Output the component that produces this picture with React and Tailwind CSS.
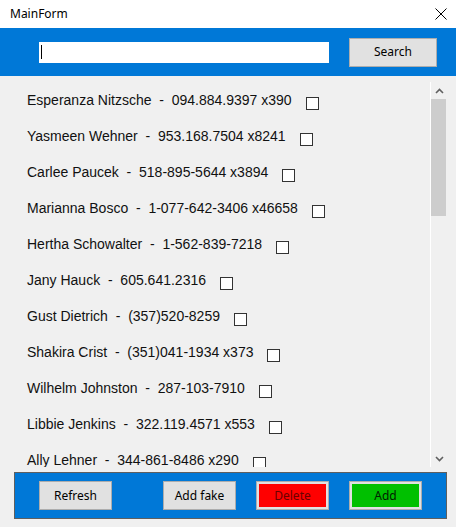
import React from "react";

const contacts = [
  { name: "Esperanza Nitzsche", phone: "094.884.9397 x390" },
  { name: "Yasmeen Wehner", phone: "953.168.7504 x8241" },
  { name: "Carlee Paucek", phone: "518-895-5644 x3894" },
  { name: "Marianna Bosco", phone: "1-077-642-3406 x46658" },
  { name: "Hertha Schowalter", phone: "1-562-839-7218" },
  { name: "Jany Hauck", phone: "605.641.2316" },
  { name: "Gust Dietrich", phone: "(357)520-8259" },
  { name: "Shakira Crist", phone: "(351)041-1934 x373" },
  { name: "Wilhelm Johnston", phone: "287-103-7910" },
  { name: "Libbie Jenkins", phone: "322.119.4571 x553" },
  { name: "Ally Lehner", phone: "344-861-8486 x290" },
];

const WinButton = ({ children, fill = "bg-[#e1e1e1]", text = "text-black", double = false }) => (
  <div
    className={`w-[73px] h-[29px] border border-[#adadad] bg-[#e1e1e1] flex ${
      double ? "p-[2px]" : ""
    }`}
  >
    <div
      className={`flex-1 flex items-center justify-center text-[12px] leading-[16px] whitespace-nowrap ${fill} ${text}`}
    >
      {children}
    </div>
  </div>
);

export default function App() {
  return (
    <div
      className="w-[456px] h-[527px] bg-[#f0f0f0] flex flex-col overflow-hidden"
      style={{ fontFamily: '"Noto Sans", "Open Sans", sans-serif' }}
    >
      {/* Title bar */}
      <div className="h-[28px] bg-white flex items-center justify-between pl-[10px] pr-[8px]">
        <span className="text-[12px] text-black">MainForm</span>
        <svg width="12" height="12" viewBox="0 0 12 12" className="mr-[1px]">
          <path d="M0.5 0.5 L11.5 11.5 M11.5 0.5 L0.5 11.5" stroke="#000" strokeWidth="1" />
        </svg>
      </div>

      {/* Search bar */}
      <div className="h-[48px] bg-[#0078d7] flex items-center pl-[39px]">
        <div className="w-[290px] h-[21px] bg-white flex items-center pl-[2px]">
          <div className="w-[1px] h-[14px] bg-black" />
        </div>
        <div className="ml-[20px] w-[88px] h-[29px] border border-[#adadad] bg-[#e1e1e1] flex items-center justify-center text-[12px] leading-[16px] text-black">
          Search
        </div>
      </div>

      {/* List */}
      <div className="mt-[6px] h-[385px] flex">
        <div
          className="flex-1 overflow-hidden"
          style={{ fontFamily: '"Liberation Sans", Arial, sans-serif' }}
        >
          {contacts.map((c) => (
            <div key={c.name} className="h-[36px] flex items-center pl-[27px]">
              <span className="text-[14px] text-[#111] whitespace-pre leading-[16px]">
                {`${c.name}  -  ${c.phone}`}
              </span>
              <div className="ml-[14px] mt-[6px] w-[13px] h-[13px] bg-white border border-[#333]" />
            </div>
          ))}
        </div>
        <div className="w-[17px] border-l border-white bg-[#f0f0f0] flex flex-col mr-[9px]">
          <div className="h-[17px] flex items-center justify-center">
            <svg width="9" height="6" viewBox="0 0 9 6">
              <path d="M1 5 L4.5 1.5 L8 5" stroke="#606060" strokeWidth="1.6" fill="none" />
            </svg>
          </div>
          <div className="h-[117px] bg-[#cdcdcd] mr-[1px]" />
          <div className="flex-1" />
          <div className="h-[17px] flex items-center justify-center">
            <svg width="9" height="6" viewBox="0 0 9 6">
              <path d="M1 1 L4.5 4.5 L8 1" stroke="#606060" strokeWidth="1.6" fill="none" />
            </svg>
          </div>
        </div>
      </div>

      {/* Bottom buttons */}
      <div className="mt-[5px] ml-[14px] w-[433px] h-[47px] bg-[#0078d7] border border-[#5f5f5f] flex items-center pl-[24px]">
        <WinButton>Refresh</WinButton>
        <div className="ml-[51px]">
          <WinButton>Add fake</WinButton>
        </div>
        <div className="ml-[20px]">
          <WinButton double fill="bg-[#ff0000]" text="text-[#6a0000]">
            Delete
          </WinButton>
        </div>
        <div className="ml-[20px]">
          <WinButton double fill="bg-[#00c000]" text="text-[#002000]">
            Add
          </WinButton>
        </div>
      </div>
    </div>
  );
}
